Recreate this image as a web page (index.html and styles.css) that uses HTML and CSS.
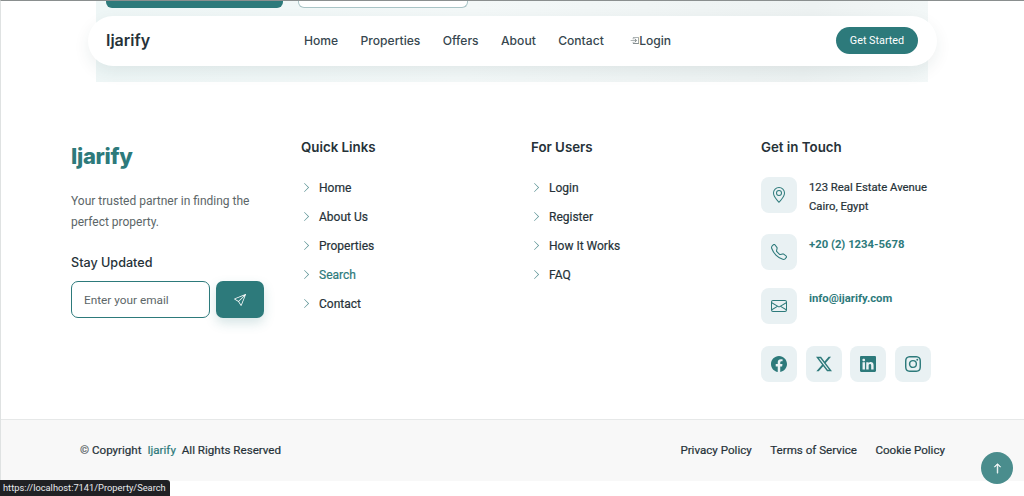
FILE: index.html
```html
<!DOCTYPE html>
<html lang="en">
<head>
<meta charset="utf-8">
<title>Ijarify</title>
<link rel="stylesheet" href="styles.css">
</head>
<body>
<svg class="sprite" aria-hidden="true">
  <symbol id="chev" viewBox="0 0 16 16"><path fill-rule="evenodd" d="M4.646 1.646a.5.5 0 0 1 .708 0l6 6a.5.5 0 0 1 0 .708l-6 6a.5.5 0 0 1-.708-.708L10.293 8 4.646 2.354a.5.5 0 0 1 0-.708z"/></symbol>
</svg>
<div class="page">
  <section class="hero">
    <div class="hero-btns"><span class="hb-solid"></span><span class="hb-outline"></span></div>
    <nav class="navbar">
      <a class="brand">Ijarify</a>
      <div class="menu">
        <a>Home</a><a>Properties</a><a>Offers</a><a>About</a><a>Contact</a>
        <a class="login"><svg viewBox="0 0 16 16"><path d="M6 3.5a.5.5 0 0 1 .5-.5h8a.5.5 0 0 1 .5.5v9a.5.5 0 0 1-.5.5h-8a.5.5 0 0 1-.5-.5v-2a.5.5 0 0 0-1 0v2A1.5 1.5 0 0 0 6.5 14h8a1.5 1.5 0 0 0 1.5-1.5v-9A1.5 1.5 0 0 0 14.5 2h-8A1.5 1.5 0 0 0 5 3.5v2a.5.5 0 0 0 1 0v-2z"/><path d="M11.854 8.354a.5.5 0 0 0 0-.708l-3-3a.5.5 0 1 0-.708.708L10.293 7.5H1.5a.5.5 0 0 0 0 1h8.793l-2.147 2.146a.5.5 0 0 0 .708.708l3-3z"/></svg>Login</a>
      </div>
      <a class="cta">Get Started</a>
    </nav>
  </section>

  <footer class="footer">
    <div class="cols">
      <div class="col">
        <div class="logo">Ijarify</div>
        <p class="tagline">Your trusted partner in finding the perfect property.</p>
        <h4 class="stay">Stay Updated</h4>
        <form class="subscribe">
          <input class="email" type="text" placeholder="Enter your email">
          <button class="send" type="button"><svg viewBox="0 0 16 16"><path d="M15.854.146a.5.5 0 0 1 .11.54l-5.819 14.547a.75.75 0 0 1-1.329.124l-3.178-4.995L.643 7.184a.75.75 0 0 1 .124-1.33L15.314.037a.5.5 0 0 1 .54.11ZM6.636 10.07l2.761 4.338L14.13 2.576 6.636 10.07Zm6.787-8.201L1.591 6.602l4.339 2.76 7.494-7.493Z"/></svg></button>
        </form>
      </div>
      <div class="col">
        <h4 class="col-title">Quick Links</h4>
        <ul class="links">
          <li><svg><use href="#chev"/></svg><a>Home</a></li>
          <li><svg><use href="#chev"/></svg><a>About Us</a></li>
          <li><svg><use href="#chev"/></svg><a>Properties</a></li>
          <li><svg><use href="#chev"/></svg><a class="hover">Search</a></li>
          <li><svg><use href="#chev"/></svg><a>Contact</a></li>
        </ul>
      </div>
      <div class="col">
        <h4 class="col-title">For Users</h4>
        <ul class="links">
          <li><svg><use href="#chev"/></svg><a>Login</a></li>
          <li><svg><use href="#chev"/></svg><a>Register</a></li>
          <li><svg><use href="#chev"/></svg><a>How It Works</a></li>
          <li><svg><use href="#chev"/></svg><a>FAQ</a></li>
        </ul>
      </div>
      <div class="col">
        <h4 class="col-title">Get in Touch</h4>
        <div class="contact">
          <div class="c-item">
            <span class="tile"><svg viewBox="0 0 16 16"><path d="M12.166 8.94c-.524 1.062-1.234 2.12-1.96 3.07A31.493 31.493 0 0 1 8 14.58a31.481 31.481 0 0 1-2.206-2.57c-.726-.95-1.436-2.008-1.96-3.07C3.304 7.867 3 6.862 3 6a5 5 0 0 1 10 0c0 .862-.305 1.867-.834 2.94zM8 16s6-5.686 6-10A6 6 0 0 0 2 6c0 4.314 6 10 6 10z"/><path d="M8 8a2 2 0 1 1 0-4 2 2 0 0 1 0 4zm0 1a3 3 0 1 0 0-6 3 3 0 0 0 0 6z"/></svg></span>
            <div class="c-text">123 Real Estate Avenue<br>Cairo, Egypt</div>
          </div>
          <div class="c-item">
            <span class="tile"><svg viewBox="0 0 16 16"><path d="M3.654 1.328a.678.678 0 0 0-1.015-.063L1.605 2.3c-.483.484-.661 1.169-.45 1.77a17.568 17.568 0 0 0 4.168 6.608 17.569 17.569 0 0 0 6.608 4.168c.601.211 1.286.033 1.77-.45l1.034-1.034a.678.678 0 0 0-.063-1.015l-2.307-1.794a.678.678 0 0 0-.58-.122l-2.19.547a1.745 1.745 0 0 1-1.657-.459L5.482 8.062a1.745 1.745 0 0 1-.46-1.657l.548-2.19a.678.678 0 0 0-.122-.58L3.654 1.328zM1.884.511a1.745 1.745 0 0 1 2.612.163L6.29 2.98c.329.423.445.974.315 1.494l-.547 2.19a.678.678 0 0 0 .178.643l2.457 2.457a.678.678 0 0 0 .644.178l2.189-.547a1.745 1.745 0 0 1 1.494.315l2.306 1.794c.829.645.905 1.87.163 2.611l-1.034 1.034c-.74.74-1.846 1.065-2.877.702a18.634 18.634 0 0 1-7.01-4.42 18.634 18.634 0 0 1-4.42-7.009c-.362-1.03-.037-2.137.703-2.877L1.885.511z"/></svg></span>
            <a class="c-link">+20 (2) 1234-5678</a>
          </div>
          <div class="c-item">
            <span class="tile"><svg viewBox="0 0 16 16"><path d="M0 4a2 2 0 0 1 2-2h12a2 2 0 0 1 2 2v8a2 2 0 0 1-2 2H2a2 2 0 0 1-2-2V4Zm2-1a1 1 0 0 0-1 1v.217l7 4.2 7-4.2V4a1 1 0 0 0-1-1H2Zm13 2.383-4.708 2.825L15 11.105V5.383Zm-.034 6.876-5.64-3.471L8 9.583l-1.326-.795-5.64 3.47A1 1 0 0 0 2 13h12a1 1 0 0 0 .966-.741ZM1 11.105l4.708-2.897L1 5.383v5.722Z"/></svg></span>
            <a class="c-link">info@ijarify.com</a>
          </div>
        </div>
        <div class="social">
          <a class="tile"><svg viewBox="0 0 16 16"><path d="M16 8.049c0-4.446-3.582-8.05-8-8.05C3.58 0-.002 3.603-.002 8.05c0 4.017 2.926 7.347 6.75 7.951v-5.625h-2.03V8.05H6.75V6.275c0-2.017 1.195-3.131 3.022-3.131.876 0 1.791.157 1.791.157v1.98h-1.009c-.993 0-1.303.621-1.303 1.258v1.51h2.218l-.354 2.326H9.25V16c3.824-.604 6.75-3.934 6.75-7.951z"/></svg></a>
          <a class="tile"><svg viewBox="0 0 16 16"><path d="M12.6.75h2.454l-5.36 6.142L16 15.25h-4.937l-3.867-5.07-4.425 5.07H.316l5.733-6.57L0 .75h5.063l3.495 4.633L12.601.75Zm-.86 13.028h1.36L4.323 2.145H2.865l8.875 11.633Z"/></svg></a>
          <a class="tile"><svg viewBox="0 0 16 16"><path d="M0 1.146C0 .513.526 0 1.175 0h13.65C15.474 0 16 .513 16 1.146v13.708c0 .633-.526 1.146-1.175 1.146H1.175C.526 16 0 15.487 0 14.854V1.146zm4.943 12.248V6.169H2.542v7.225h2.401zm-1.2-8.212c.837 0 1.358-.554 1.358-1.248-.015-.709-.52-1.248-1.342-1.248-.822 0-1.359.54-1.359 1.248 0 .694.521 1.248 1.327 1.248h.016zm4.908 8.212V9.359c0-.216.016-.432.08-.586.173-.431.568-.878 1.232-.878.869 0 1.216.662 1.216 1.634v3.865h2.401V9.25c0-2.22-1.184-3.252-2.764-3.252-1.274 0-1.845.7-2.165 1.193v.025h-.016a5.54 5.54 0 0 1 .016-.025V6.169h-2.4c.03.678 0 7.225 0 7.225h2.4z"/></svg></a>
          <a class="tile"><svg viewBox="0 0 16 16"><path d="M8 0C5.829 0 5.556.01 4.703.048 3.85.088 3.269.222 2.76.42a3.917 3.917 0 0 0-1.417.923A3.927 3.927 0 0 0 .42 2.76C.222 3.268.087 3.85.048 4.7.01 5.555 0 5.827 0 8.001c0 2.172.01 2.444.048 3.297.04.852.174 1.433.372 1.942.205.526.478.972.923 1.417.444.445.89.719 1.416.923.51.198 1.09.333 1.942.372C5.555 15.99 5.827 16 8 16s2.444-.01 3.298-.048c.851-.04 1.434-.174 1.943-.372a3.916 3.916 0 0 0 1.416-.923c.445-.445.718-.891.923-1.417.197-.509.332-1.09.372-1.942C15.99 10.445 16 10.173 16 8s-.01-2.445-.048-3.299c-.04-.851-.175-1.433-.372-1.941a3.926 3.926 0 0 0-.923-1.417A3.911 3.911 0 0 0 13.24.42c-.51-.198-1.092-.333-1.943-.372C10.443.01 10.172 0 7.998 0h.003zm-.717 1.442h.718c2.136 0 2.389.007 3.232.046.78.035 1.204.166 1.486.275.373.145.64.319.92.599.28.28.453.546.598.92.11.281.24.705.275 1.485.039.843.047 1.096.047 3.231s-.008 2.389-.047 3.232c-.035.78-.166 1.203-.275 1.485a2.47 2.47 0 0 1-.599.919c-.28.28-.546.453-.92.598-.28.11-.704.24-1.485.276-.843.038-1.096.047-3.232.047s-2.39-.009-3.233-.047c-.78-.036-1.203-.166-1.485-.276a2.478 2.478 0 0 1-.92-.598 2.48 2.48 0 0 1-.6-.92c-.109-.281-.24-.705-.275-1.485-.038-.843-.046-1.096-.046-3.233 0-2.136.008-2.388.046-3.231.036-.78.166-1.204.276-1.486.145-.373.319-.64.599-.92.28-.28.546-.453.92-.598.282-.11.705-.24 1.485-.276.738-.034 1.024-.044 2.515-.045v.002zm4.988 1.328a.96.96 0 1 0 0 1.92.96.96 0 0 0 0-1.92zm-4.27 1.122a4.109 4.109 0 1 0 0 8.217 4.109 4.109 0 0 0 0-8.217zm0 1.441a2.667 2.667 0 1 1 0 5.334 2.667 2.667 0 0 1 0-5.334z"/></svg></a>
        </div>
      </div>
    </div>
    <div class="bottom">
      <div class="copy"><span class="c-mark">©</span> Copyright <b>Ijarify</b> All Rights Reserved</div>
      <div class="legal"><a>Privacy Policy</a><a>Terms of Service</a><a>Cookie Policy</a></div>
    </div>
  </footer>
</div>
<a class="to-top"><svg viewBox="0 0 16 16"><path fill-rule="evenodd" d="M8 15a.5.5 0 0 0 .5-.5V2.707l3.146 3.147a.5.5 0 0 0 .708-.708l-4-4a.5.5 0 0 0-.708 0l-4 4a.5.5 0 1 0 .708.708L7.5 2.707V14.5a.5.5 0 0 0 .5.5z" stroke="#fff" stroke-width=".8"/></svg></a>
<div class="status">https://localhost:7141/Property/Search</div>
</body>
</html>
```
FILE: styles.css
```css
* { box-sizing: border-box; }
html, body { margin: 0; height: 496px; overflow: hidden; background: #fff; }
body { font-family: Roboto, "Liberation Sans", sans-serif; color: #263238; }
a { color: inherit; text-decoration: none; }
.sprite { display: none; }

.page { border-top: 1px solid #8a8f8f; border-left: 1px solid #dfe2e2; height: 496px; }

.hero { width: 832px; height: 81px; margin-left: 95px; background: linear-gradient(100deg, #eef6f6, #f3f8f8 45%, #edf2f2 85%, #f3f8f8); display: flex; flex-direction: column; }
.hero-btns { height: 15px; display: flex; gap: 15px; padding-left: 10px; align-items: flex-start; flex: none; }
.hb-solid { width: 177px; height: 7px; background: #2d7a7b; border-radius: 0 0 6px 6px; }
.hb-outline { width: 170px; height: 7px; background: #fff; border: 1px solid #a9c4c6; border-top: 0; border-radius: 0 0 6px 6px; }

.navbar { width: 849px; height: 50px; margin-left: -8px; background: #fff; border-radius: 25px; box-shadow: 0 6px 16px rgba(30, 70, 70, .08); display: flex; align-items: center; padding: 0 19px 2px 18px; flex: none; position: relative; }
.brand { font: 600 16px Inter, sans-serif; color: #263238; width: 198px; flex: none; }
.menu { display: flex; align-items: center; gap: 22.4px; font: 500 12.1px Inter, sans-serif; color: #37474f; flex: 1; }
.login { display: flex; align-items: center; margin-left: 4px; }
.login svg { width: 9px; height: 9px; fill: #5f6b6d; }
.cta { width: 82px; height: 27px; border-radius: 14px; background: #2d7a7b; color: #fff; font: 400 10.8px/27px Roboto, sans-serif; text-align: center; flex: none; }

.cols { display: grid; grid-template-columns: repeat(4, 230px); padding: 56px 0 0 70px; height: 337px; }
.logo { font: 800 22px/30px Inter, sans-serif; color: #2d7a7b; letter-spacing: -.3px; padding-top: 3px; height: 33px; }
.tagline { margin: 20px 0 0; width: 190px; font-size: 12px; line-height: 21px; color: #5c6668; }
.stay { margin: 22px 0 0; font: 500 12.6px/16px Inter, sans-serif; color: #263238; }
.subscribe { display: flex; gap: 6px; margin-top: 10px; }
.email { width: 139px; height: 37px; border: 1px solid #2d7a7b; border-radius: 7px; padding: 0 12px; font: 400 11.8px Roboto, sans-serif; background: #fff; outline: 0; }
.email::placeholder { color: #5c6668; opacity: 1; }
.send { width: 48px; height: 37px; border: 0; border-radius: 7px; background: #2d7a7b; box-shadow: 0 5px 12px rgba(45, 122, 123, .2); display: flex; align-items: center; justify-content: center; padding: 0; }
.send svg { width: 12px; height: 12px; fill: #fff; }

.col-title { margin: 0; font: 600 13.3px/18px Inter, sans-serif; color: #263238; }
.links { list-style: none; margin: 17px 0 0; padding: 0; display: flex; flex-direction: column; }
.links li { height: 29px; display: flex; align-items: center; gap: 7px; font-size: 12px; color: #263238; -webkit-text-stroke: .2px currentColor; }
.links svg { width: 11px; height: 11px; fill: #4f8a8c; flex: none; }
.hover { color: #2d7a7b; }

.contact { display: flex; flex-direction: column; gap: 18px; margin-top: 21px; }
.c-item { display: flex; gap: 12px; align-items: flex-start; font-size: 11.3px; line-height: 19px; }
.tile { width: 36px; height: 36px; border-radius: 8px; background: #e9f1f3; display: flex; align-items: center; justify-content: center; flex: none; }
.tile svg { width: 16px; height: 16px; fill: #2d7a7b; }
.c-text { color: #263238; padding-top: 1px; -webkit-text-stroke: .2px currentColor; }
.c-link { color: #2d7a7b; font-weight: 700; padding-top: 1px; }
.social { display: flex; gap: 8.7px; margin-top: 22px; }

.bottom { height: 62px; border-top: 1px solid #e6e8e8; background: #f8f8f8; display: flex; align-items: center; justify-content: space-between; padding: 0 79px 2px; font-size: 11.6px; color: #263238; -webkit-text-stroke: .2px currentColor; }
.copy b { color: #2d7a7b; font-weight: 400; margin: 0 3px; }
.c-mark { color: #5c6668; }
.legal { display: flex; gap: 18.5px; }

.to-top { position: fixed; left: 981px; top: 452px; width: 32px; height: 32px; border-radius: 50%; background: #4a8d8d; display: flex; align-items: center; justify-content: center; }
.to-top svg { width: 11px; height: 11px; fill: #fff; }
.status { position: fixed; left: 0; bottom: 0; height: 16px; width: 170px; background: #202124; color: #e8eaed; font: 400 9.3px/16px Roboto, sans-serif; padding-left: 3px; border-radius: 0 3px 0 0; white-space: nowrap; }
```
